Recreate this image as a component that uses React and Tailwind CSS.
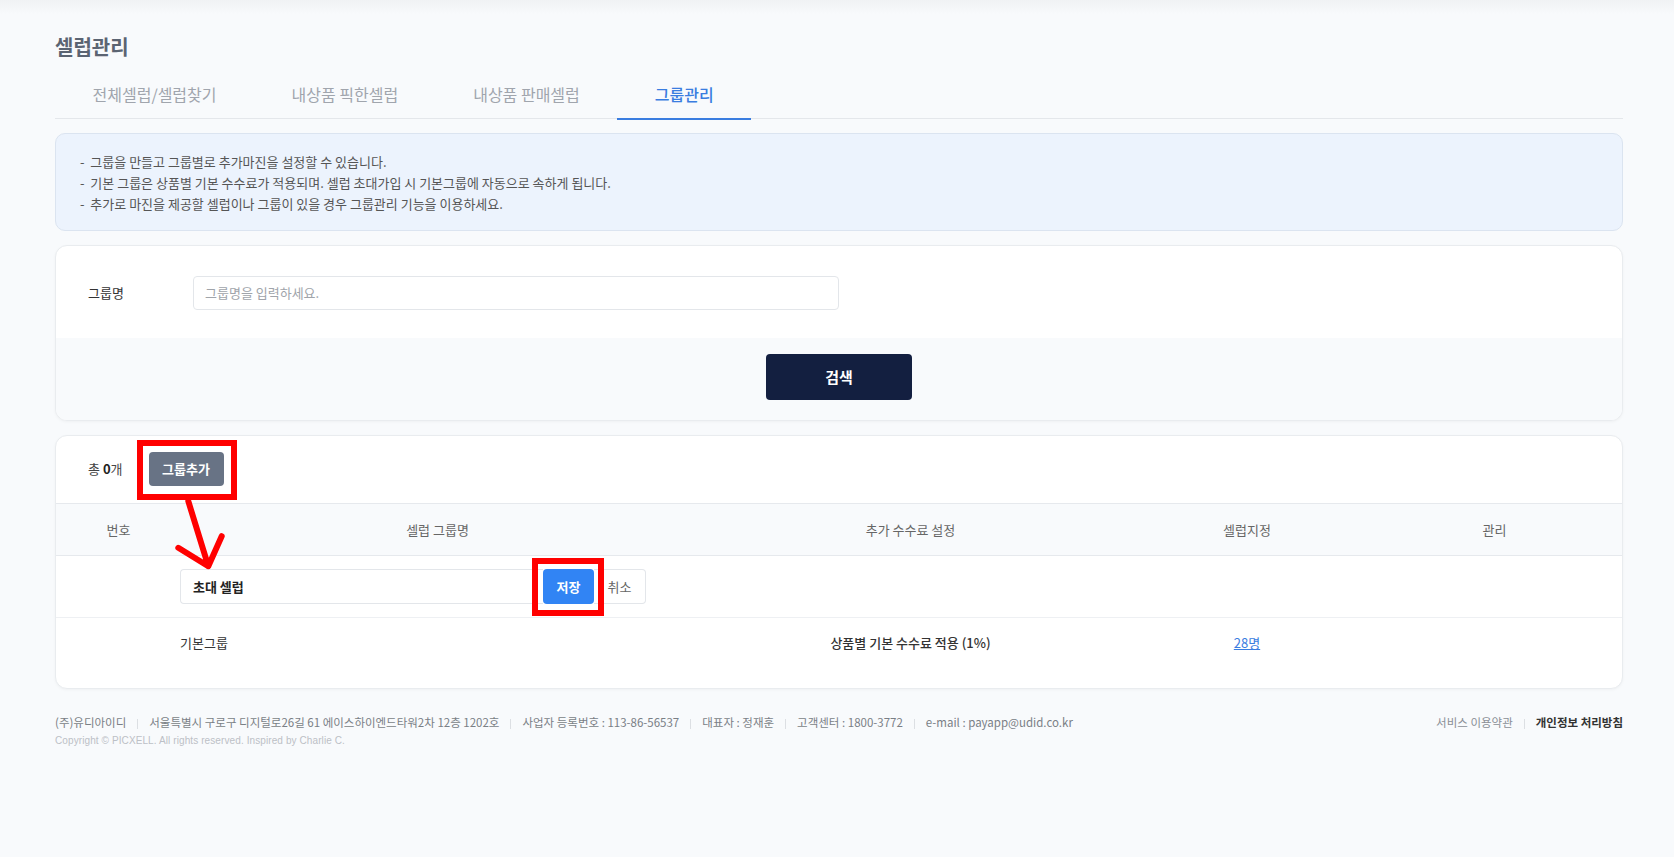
import React from "react";

const Sep = () => <span className="inline-block w-px h-[10px] bg-[#dcdfe3] mx-[11px] align-middle" />;

export default function App() {
  return (
    <div className="min-h-screen bg-[#f8fafc] font-['Noto_Sans_CJK_KR','Noto_Sans',sans-serif] text-[#333]">
      <div className="h-[14px] bg-gradient-to-b from-[#f0f2f4] to-[#f8fafc]" />
      <div className="ml-[55px] w-[1568px]">
        <h1 className="mt-[19px] text-[20px] leading-[28px] font-bold text-[#5b6472]">셀럽관리</h1>

        {/* Tabs */}
        <div className="mt-[8px] flex border-b border-[#e4e7eb]">
          {["전체셀럽/셀럽찾기", "내상품 픽한셀럽", "내상품 판매셀럽"].map((t) => (
            <div key={t} className="h-[49px] px-[37.5px] flex items-center text-[16px] text-[#a0a5ad]">
              {t}
            </div>
          ))}
          <div className="relative h-[49px] px-[37.5px] flex items-center text-[16px] font-medium text-[#3a7de0]">
            그룹관리
            <span className="absolute left-0 right-0 -bottom-[2px] h-[2px] bg-[#3a7de0]" />
          </div>
        </div>

        {/* Info box */}
        <div className="mt-[14px] rounded-[10px] border border-[#dbe4f0] bg-[#ecf3fd] pl-[24px] pt-[17px] pb-[16px] text-[13px] leading-[21px] text-[#555]">
          <p>-&nbsp; 그룹을 만들고 그룹별로 추가마진을 설정할 수 있습니다.</p>
          <p>-&nbsp; 기본 그룹은 상품별 기본 수수료가 적용되며. 셀럽 초대가입 시 기본그룹에 자동으로 속하게 됩니다.</p>
          <p>-&nbsp; 추가로 마진을 제공할 셀럽이나 그룹이 있을 경우 그룹관리 기능을 이용하세요.</p>
        </div>

        {/* Search card */}
        <div className="mt-[14px] rounded-[12px] border border-[#e9ecef] bg-white shadow-[0_1px_3px_rgba(0,0,0,0.04)] overflow-hidden">
          <div className="flex items-center pl-[32px] pt-[30px] pb-[28px]">
            <div className="w-[105px] text-[13px] text-[#333]">그룹명</div>
            <div className="w-[646px] h-[34px] rounded-[4px] border border-[#e3e6ea] flex items-center pl-[11px] text-[13px] text-[#a0a4aa]">
              그룹명을 입력하세요.
            </div>
          </div>
          <div className="bg-[#f8fafc] flex justify-center pt-[16px] pb-[20px]">
            <button className="w-[146px] h-[46px] rounded-[4px] bg-[#131f40] text-white text-[15px] font-bold">검색</button>
          </div>
        </div>

        {/* List card */}
        <div className="relative mt-[14px] rounded-[12px] border border-[#e9ecef] bg-white shadow-[0_1px_3px_rgba(0,0,0,0.04)] pb-[20px]">
          <div className="flex items-center pl-[32px] pt-[16px] pb-[17px]">
            <span className="text-[13px] text-[#444]">
              총 <span className="font-bold text-[#222]">0</span>개
            </span>
            <div className="relative ml-[26px]">
              <button className="w-[75px] h-[34px] rounded-[4px] bg-[#687385] text-white text-[13px] font-bold">그룹추가</button>
              <div className="absolute -left-[12px] -right-[13px] -top-[12px] -bottom-[14px] border-[6px] border-[#ff0000]" />
            </div>
          </div>

          <div className="grid grid-cols-[125px_513px_433px_240px_1fr] h-[53px] items-center bg-[#f8fafc] border-y border-[#e6e9ed] text-[13px] text-[#666] text-center">
            <div>번호</div>
            <div>셀럽 그룹명</div>
            <div>추가 수수료 설정</div>
            <div>셀럽지정</div>
            <div>관리</div>
          </div>

          <div className="grid grid-cols-[124px_514px_433px_240px_1fr] h-[62px] items-center border-b border-[#eef0f3] text-[13px]">
            <div />
            <div className="flex h-[35px]">
              <div className="w-[363px] border-y border-l border-[#e3e6ea] rounded-l-[4px] flex items-center pl-[12px] font-semibold text-[#222]">초대 셀럽</div>
              <div className="relative">
                <button className="w-[51px] h-[35px] rounded-[4px] bg-[#3184f4] text-white font-semibold">저장</button>
                <div className="absolute -left-[11px] -right-[10px] -top-[11px] -bottom-[12px] border-[6px] border-[#ff0000]" />
              </div>
              <div className="w-[52px] border-y border-r border-[#e3e6ea] rounded-r-[4px] flex items-center justify-center text-[#666]">취소</div>
            </div>
            <div />
            <div />
            <div />
          </div>

          <div className="grid grid-cols-[124px_514px_433px_240px_1fr] h-[50px] items-center text-[13px]">
            <div />
            <div className="text-[#333]">기본그룹</div>
            <div className="text-center text-[#333] font-medium">상품별 기본 수수료 적용 (1%)</div>
            <div className="text-center">
              <span className="text-[#3a7de0] underline">28명</span>
            </div>
            <div />
          </div>

          <svg className="absolute left-[110px] top-[60px] w-[80px] h-[80px] pointer-events-none" viewBox="0 0 80 80" fill="none">
            <path d="M22.3 5.2 L42.3 70.2 M12.3 51.8 L42.3 70.2 L55.7 40.2" stroke="#ff0000" strokeWidth="6" strokeLinecap="round" strokeLinejoin="round" />
          </svg>
        </div>

        {/* Footer */}
        <div className="mt-[24px] flex justify-between">
          <div>
            <div className="text-[11.5px] leading-[18px] text-[#7a7f86]">
              (주)유디아이디<Sep />서울특별시 구로구 디지털로26길 61 에이스하이엔드타워2차 12층 1202호<Sep />사업자 등록번호 : 113-86-56537<Sep />대표자 : 정재훈<Sep />고객센터 : 1800-3772<Sep />e-mail : payapp@udid.co.kr
            </div>
            <div className="mt-[3px] text-[10px] leading-[14px] tracking-[0.1px] text-[#bcc0c6] font-['Liberation_Sans',sans-serif]">
              Copyright © PICXELL. All rights reserved. Inspired by Charlie C.
            </div>
          </div>
          <div className="text-[11.5px] leading-[18px]">
            <span className="text-[#8a8f96]">서비스 이용약관</span>
            <Sep />
            <span className="font-bold text-[#333]">개인정보 처리방침</span>
          </div>
        </div>
      </div>
    </div>
  );
}
